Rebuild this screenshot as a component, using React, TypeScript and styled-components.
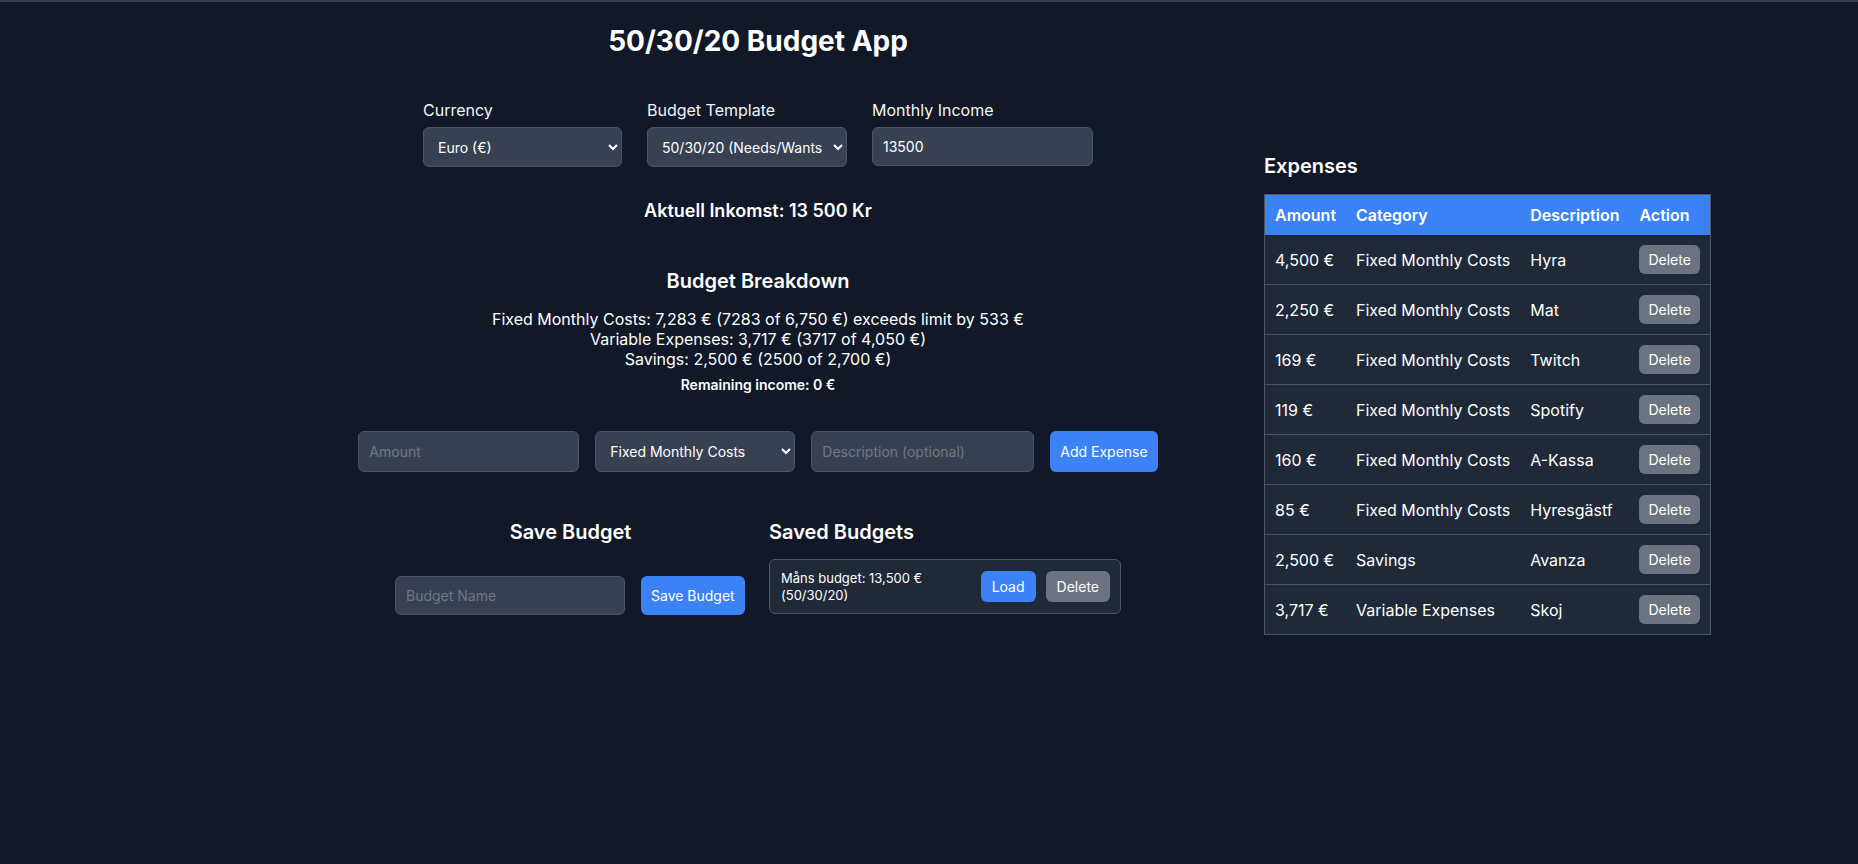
import React from "react";
import styled, { createGlobalStyle } from "styled-components";

const GlobalStyle = createGlobalStyle`
  html, body { margin: 0; padding: 0; }
  body {
    background: #111827;
    color: #ffffff;
    font-family: Inter, "Noto Sans", "Liberation Sans", sans-serif;
    border-top: 2px solid #3a3d43;
    min-height: 862px;
  }
  * { box-sizing: border-box; }
`;

const Page = styled.div`
  display: grid;
  grid-template-columns: 1012px 446px;
  padding-left: 252px;
  align-items: start;
`;

const Main = styled.main`
  display: flex;
  flex-direction: column;
  align-items: center;
  text-align: center;
`;

const Title = styled.h1`
  font-size: 28px;
  font-weight: 700;
  line-height: normal;
  margin: 22px 0 42px;
`;

const ControlsRow = styled.div`
  display: flex;
  gap: 25px;
  justify-content: center;
  text-align: left;
`;

const Field = styled.div`
  display: flex;
  flex-direction: column;
`;

const Label = styled.label`
  font-size: 16px;
  line-height: normal;
  margin-bottom: 7px;
  color: #f3f4f6;
`;

const Select = styled.select<{ $w: number; $h?: number }>`
  width: ${(p) => p.$w}px;
  height: ${(p) => p.$h ?? 40}px;
  padding: 0 8px 0 10px;
  background: #374151;
  color: #ffffff;
  border: 1px solid #4b5563;
  border-radius: 6px;
  font-family: inherit;
  font-size: 14px;
  color-scheme: dark;
`;

const Input = styled.input<{ $w: number; $h?: number }>`
  width: ${(p) => p.$w}px;
  height: ${(p) => p.$h ?? 40}px;
  padding: 0 10px;
  background: #374151;
  color: #ffffff;
  border: 1px solid #4b5563;
  border-radius: 6px;
  font-family: inherit;
  font-size: 14px;
  &::placeholder { color: #717680; }
`;

const Income = styled.p`
  font-size: 18px;
  font-weight: 600;
  line-height: normal;
  margin: 33px 0 0;
`;

const SectionTitle = styled.h2<{ $align?: string }>`
  font-size: 20px;
  font-weight: 600;
  line-height: normal;
  margin: 0;
  text-align: ${(p) => p.$align ?? "center"};
`;

const Breakdown = styled.section`
  margin-top: 48px;
  display: flex;
  flex-direction: column;
  align-items: center;
`;

const Lines = styled.div`
  margin-top: 16px;
  font-size: 16px;
  line-height: normal;
`;

const Line = styled.div``;

const Remaining = styled.div`
  margin-top: 7px;
  font-size: 14px;
  font-weight: 600;
  line-height: normal;
`;

const ExpenseForm = styled.div`
  margin-top: 38px;
  display: flex;
  gap: 16px;
`;

const Button = styled.button<{ $tone?: "blue" | "gray"; $pad?: string; $h?: number }>`
  background: ${(p) => (p.$tone === "gray" ? "#6b7280" : "#3b82f6")};
  color: #ffffff;
  border: none;
  border-radius: 6px;
  font-family: inherit;
  font-size: 14px;
  line-height: normal;
  padding: ${(p) => p.$pad ?? "0 10px"};
  ${(p) => (p.$h ? `height: ${p.$h}px;` : "")}
  cursor: pointer;
  white-space: nowrap;
`;

const SaveArea = styled.div`
  margin-top: 48px;
  display: flex;
  gap: 23px;
  justify-content: center;
  align-items: flex-start;
`;

const SaveColumn = styled.div<{ $w: number }>`
  width: ${(p) => p.$w}px;
  display: flex;
  flex-direction: column;
`;

const SaveForm = styled.div`
  margin-top: 32px;
  display: flex;
  gap: 16px;
`;

const SavedCard = styled.div`
  margin-top: 15px;
  width: 352px;
  min-height: 55px;
  display: flex;
  align-items: center;
  gap: 10px;
  padding: 8px 10px 8px 11px;
  background: #1f2937;
  border: 1px solid #4b5563;
  border-radius: 6px;
  text-align: left;
`;

const SavedText = styled.span`
  flex: 1;
  font-size: 13px;
  line-height: 17px;
  padding-right: 6px;
`;

const Side = styled.aside`
  padding-top: 152px;
`;

const SideTitle = styled.h2`
  font-size: 20px;
  font-weight: 600;
  line-height: normal;
  margin: 0 0 16px;
`;

const Table = styled.table`
  border-collapse: collapse;
  border: 1px solid #4b5563;
  font-size: 16px;
  line-height: normal;
`;

const Th = styled.th`
  background: #3b82f6;
  color: #ffffff;
  font-weight: 600;
  text-align: left;
  padding: 10px;
  white-space: nowrap;
`;

const Tr = styled.tr`
  background: #1f2937;
  border-bottom: 1px solid #4b5563;
`;

const Td = styled.td`
  padding: 10px;
  white-space: nowrap;
`;

const expenses = [
  { amount: "4,500 €", category: "Fixed Monthly Costs", description: "Hyra" },
  { amount: "2,250 €", category: "Fixed Monthly Costs", description: "Mat" },
  { amount: "169 €", category: "Fixed Monthly Costs", description: "Twitch" },
  { amount: "119 €", category: "Fixed Monthly Costs", description: "Spotify" },
  { amount: "160 €", category: "Fixed Monthly Costs", description: "A-Kassa" },
  { amount: "85 €", category: "Fixed Monthly Costs", description: "Hyresgästf" },
  { amount: "2,500 €", category: "Savings", description: "Avanza" },
  { amount: "3,717 €", category: "Variable Expenses", description: "Skoj" },
];

export default function App() {
  return (
    <>
      <GlobalStyle />
      <Page>
        <Main>
          <Title>50/30/20 Budget App</Title>
          <ControlsRow>
            <Field>
              <Label>Currency</Label>
              <Select $w={199} defaultValue="EUR">
                <option value="EUR">Euro (€)</option>
                <option value="SEK">Svenska kronor (Kr)</option>
                <option value="USD">US Dollar ($)</option>
              </Select>
            </Field>
            <Field>
              <Label>Budget Template</Label>
              <Select $w={200} defaultValue="503020">
                <option value="503020">50/30/20 (Needs/Wants/Savings)</option>
                <option value="702010">70/20/10</option>
              </Select>
            </Field>
            <Field>
              <Label>Monthly Income</Label>
              <Input $w={221} $h={39} defaultValue="13500" />
            </Field>
          </ControlsRow>

          <Income>Aktuell Inkomst: 13 500 Kr</Income>

          <Breakdown>
            <SectionTitle>Budget Breakdown</SectionTitle>
            <Lines>
              <Line>Fixed Monthly Costs: 7,283 € (7283 of 6,750 €) exceeds limit by 533 €</Line>
              <Line>Variable Expenses: 3,717 € (3717 of 4,050 €)</Line>
              <Line>Savings: 2,500 € (2500 of 2,700 €)</Line>
            </Lines>
            <Remaining>Remaining income: 0 €</Remaining>
          </Breakdown>

          <ExpenseForm>
            <Input $w={221} $h={41} placeholder="Amount" />
            <Select $w={200} $h={41} defaultValue="fixed">
              <option value="fixed">Fixed Monthly Costs</option>
              <option value="variable">Variable Expenses</option>
              <option value="savings">Savings</option>
            </Select>
            <Input $w={223} $h={41} placeholder="Description (optional)" />
            <Button $h={41}>Add Expense</Button>
          </ExpenseForm>

          <SaveArea>
            <SaveColumn $w={351}>
              <SectionTitle>Save Budget</SectionTitle>
              <SaveForm>
                <Input $w={230} $h={39} placeholder="Budget Name" />
                <Button $h={39}>Save Budget</Button>
              </SaveForm>
            </SaveColumn>
            <SaveColumn $w={352}>
              <SectionTitle $align="left">Saved Budgets</SectionTitle>
              <SavedCard>
                <SavedText>Måns budget: 13,500 € (50/30/20)</SavedText>
                <Button $pad="0 11px" $h={31}>Load</Button>
                <Button $tone="gray" $pad="0 11px" $h={31}>Delete</Button>
              </SavedCard>
            </SaveColumn>
          </SaveArea>
        </Main>

        <Side>
          <SideTitle>Expenses</SideTitle>
          <Table>
            <thead>
              <tr>
                <Th>Amount</Th>
                <Th>Category</Th>
                <Th>Description</Th>
                <Th>Action</Th>
              </tr>
            </thead>
            <tbody>
              {expenses.map((e, i) => (
                <Tr key={i}>
                  <Td>{e.amount}</Td>
                  <Td>{e.category}</Td>
                  <Td>{e.description}</Td>
                  <Td>
                    <Button $tone="gray" $pad="0 9px" $h={29}>Delete</Button>
                  </Td>
                </Tr>
              ))}
            </tbody>
          </Table>
        </Side>
      </Page>
    </>
  );
}
